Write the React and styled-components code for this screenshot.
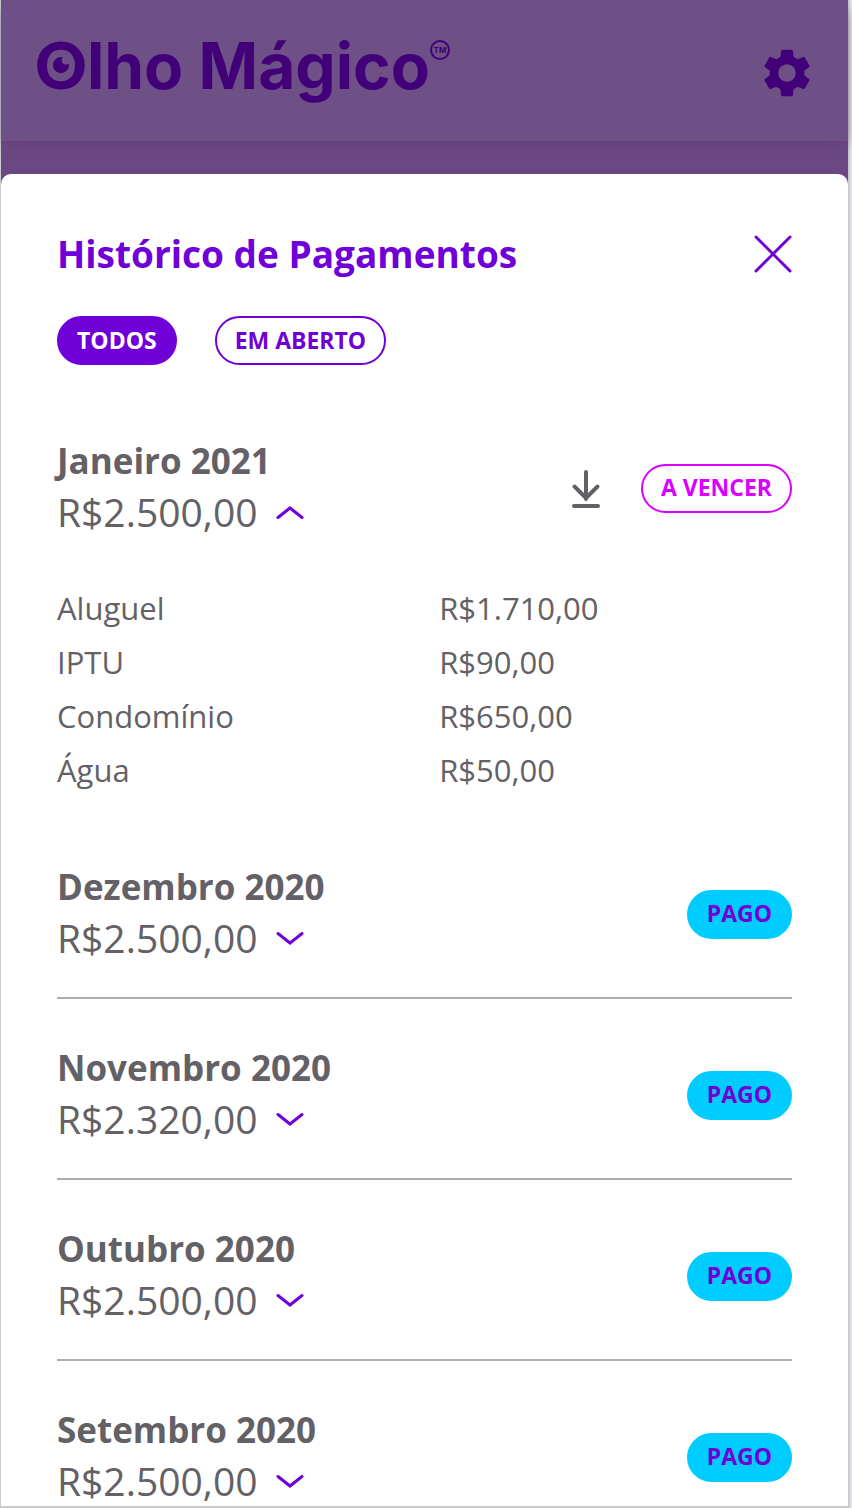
import { useState } from "react";
import styled, { createGlobalStyle } from "styled-components";
import { MdSettings } from "react-icons/md";

const GlobalStyle = createGlobalStyle`
    * {
        box-sizing: border-box;
        margin: 0;
        padding: 0;
    }

    body {
        background-color: #e2e2e6;
        color: #636166;
        font-family: "Open Sans", "Noto Sans", sans-serif;
    }

    button {
        font-family: inherit;
        cursor: pointer;
    }
`

const Frame = styled.div`
    display: flex;
    flex-direction: column;
    height: 100vh;
    margin-right: 2px;
    border: solid #cbcbcd;
    border-width: 0 2px 2px 1px;
    background-color: #6b4884;
`

const Header = styled.header`
    display: flex;
    flex-shrink: 0;
    align-items: center;
    justify-content: space-between;
    height: 141px;
    margin-bottom: 33px;
    padding: 0 32px 0 34px;
    background-color: #6e5087;
    box-shadow: 0 6px 12px -4px #643d7c;
    color: #410077;
`

const Logo = styled.a`
    display: flex;
    align-items: flex-start;
    padding-bottom: 10px;
    color: inherit;
    font-family: Inter, sans-serif;
    font-size: 64px;
    font-weight: 700;
    line-height: 78px;
    text-decoration: none;
`

const Eye = styled.span`
    position: relative;
    display: inline-block;
    font-family: Lato, sans-serif;
    font-weight: 900;
`

const Pupil = styled.svg`
    position: absolute;
    top: 50%;
    left: 50%;
    margin: -8px;
`

const Trademark = styled.small`
    width: 20px;
    height: 20px;
    margin-top: 14px;
    border: 2px solid;
    border-radius: 50%;
    font-size: 8px;
    line-height: 16px;
    text-align: center;
`

const IconButton = styled.button`
    display: flex;
    border: none;
    background: none;
    color: ${props => props.$color || 'inherit'};
`

const SettingsButton = styled(IconButton)`
    padding-top: 4px;
`

const Panel = styled.main`
    flex: 1;
    min-height: 0;
    overflow-y: auto;
    scrollbar-width: none;
    padding: 54px 56px 0;
    border-radius: 10px 10px 0 0;
    background-color: white;
`

const TitleBar = styled.div`
    display: flex;
    align-items: center;
    justify-content: space-between;
    margin-bottom: 36px;
`

const Title = styled.h1`
    color: #7000d8;
    font-size: 37px;
    font-weight: 700;
    line-height: 52px;
`

const Filters = styled.div`
    display: flex;
    gap: 38px;
    margin-bottom: 27px;
`

const pill = `
    display: flex;
    align-items: center;
    height: 49px;
    padding: 0 18px 2px;
    border: 2px solid;
    border-radius: 25px;
    font-size: 23px;
    font-weight: 700;
    line-height: 32px;
`

const FilterButton = styled.button`
    ${pill}
    border-color: #7000d8;
    background-color: ${props => props.$active ? '#7000d8' : 'white'};
    color: ${props => props.$active ? 'white' : '#7000d8'};
`

const Status = styled.span`
    ${pill}
    border-color: ${props => props.$paid ? '#00ccff' : '#d800ff'};
    background-color: ${props => props.$paid ? '#00ccff' : 'white'};
    color: ${props => props.$paid ? '#7000d8' : '#d800ff'};
`

const Item = styled.li`
    padding: 44px 0 ${props => props.$open ? '20px' : '33px'};
    border-bottom: ${props => props.$open ? 'none' : '2px solid #aeacb1'};
    list-style: none;
`

const Row = styled.div`
    display: flex;
    align-items: center;
    justify-content: space-between;
`

const Actions = styled.div`
    display: flex;
    align-items: center;
    gap: 40px;
    padding-top: 2px;
`

const Month = styled.h2`
    font-size: 35px;
    font-weight: 700;
    line-height: 50px;
`

const Amount = styled.button`
    display: flex;
    align-items: center;
    gap: 18px;
    border: none;
    background: none;
    color: inherit;
    font-size: 39px;
    line-height: 52px;
`

const Details = styled.table`
    width: 100%;
    margin-top: 43px;
    margin-bottom: 1px;
    border-collapse: collapse;
    table-layout: fixed;
    font-size: 31px;
    line-height: 54px;
    text-align: left;

    th {
        width: 52%;
        font-weight: 400;
    }
`

const payments = [
    {
        month: 'Janeiro 2021',
        total: 'R$2.500,00',
        paid: false,
        items: [
            ['Aluguel', 'R$1.710,00'],
            ['IPTU', 'R$90,00'],
            ['Condomínio', 'R$650,00'],
            ['Água', 'R$50,00'],
        ],
    },
    { month: 'Dezembro 2020', total: 'R$2.500,00', paid: true, items: [] },
    { month: 'Novembro 2020', total: 'R$2.320,00', paid: true, items: [] },
    { month: 'Outubro 2020', total: 'R$2.500,00', paid: true, items: [] },
    { month: 'Setembro 2020', total: 'R$2.500,00', paid: true, items: [] },
]

function Chevron({ up }) {
    return (
        <svg width="28" height="15" viewBox="0 0 28 15" fill="none" stroke="#7000d8" strokeWidth="3" strokeLinecap="round" aria-hidden="true">
            <path d={up ? "M2 12.5 14 3l12 9.5" : "M2 2.5 14 12l12-9.5"} />
        </svg>
    );
}

function Payment({ payment }) {
    const [open, setOpen] = useState(payment.items.length > 0);

    return (
        <Item $open={open}>
            <Row>
                <div>
                    <Month>{payment.month}</Month>
                    <Amount aria-expanded={open} onClick={() => setOpen(!open)}>
                        {payment.total}
                        <Chevron up={open} />
                    </Amount>
                </div>
                <Actions>
                    {!payment.paid && (
                        <IconButton aria-label="Baixar boleto" $color="#636166">
                            <svg width="30" height="40" viewBox="0 0 30 40" fill="none" stroke="currentColor" strokeWidth="4" strokeLinecap="round" strokeLinejoin="round">
                                <path d="M15 4v27M3.500 18.500 15 30l11.500-11.500M3 38h24" />
                            </svg>
                        </IconButton>
                    )}
                    <Status $paid={payment.paid}>{payment.paid ? 'PAGO' : 'A VENCER'}</Status>
                </Actions>
            </Row>
            {open && (
                <Details>
                    <tbody>
                        {payment.items.map(([name, value]) => (
                            <tr key={name}>
                                <th scope="row">{name}</th>
                                <td>{value}</td>
                            </tr>
                        ))}
                    </tbody>
                </Details>
            )}
        </Item>
    );
}

function App() {
    const [filter, setFilter] = useState('todos');
    const visible = payments.filter(payment => filter === 'todos' || !payment.paid);

    return (
        <Frame>
            <GlobalStyle />
            <Header>
                <Logo href="#">
                    <span>
                        <Eye>
                            O
                            <Pupil width="16" height="16" viewBox="0 0 16 16" aria-hidden="true">
                                <path fill="currentColor" d="M10 .3A8 8 0 1 0 15.800 6.500 4 4 0 1 1 10 .3Z" />
                            </Pupil>
                        </Eye>
                        lho Mágico
                    </span>
                    <Trademark>TM</Trademark>
                </Logo>
                <SettingsButton aria-label="Configurações">
                    <MdSettings size={58} />
                </SettingsButton>
            </Header>
            <Panel>
                <TitleBar>
                    <Title>Histórico de Pagamentos</Title>
                    <IconButton aria-label="Fechar" $color="#7000d8">
                        <svg width="38" height="38" viewBox="0 0 38 38" fill="none" stroke="currentColor" strokeWidth="3" strokeLinecap="round">
                            <path d="M2 2l34 34M36 2 2 36" />
                        </svg>
                    </IconButton>
                </TitleBar>
                <Filters>
                    <FilterButton $active={filter === 'todos'} onClick={() => setFilter('todos')}>TODOS</FilterButton>
                    <FilterButton $active={filter === 'aberto'} onClick={() => setFilter('aberto')}>EM ABERTO</FilterButton>
                </Filters>
                <ul>
                    {visible.map(payment => (
                        <Payment key={payment.month} payment={payment} />
                    ))}
                </ul>
            </Panel>
        </Frame>
    );
}

export default App;
